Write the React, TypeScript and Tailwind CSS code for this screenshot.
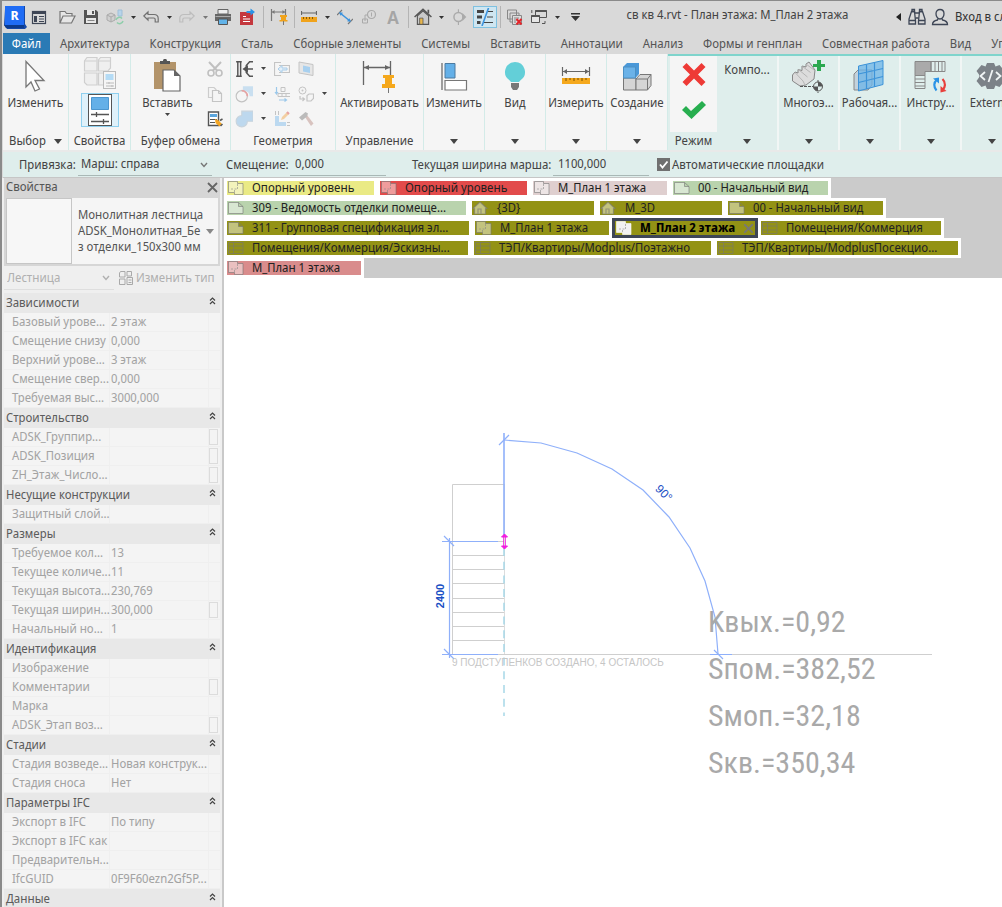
import type { ReactNode } from 'react'
import clsx from 'clsx'

const RIBBON_TABS = [
  'Архитектура',
  'Конструкция',
  'Сталь',
  'Сборные элементы',
  'Системы',
  'Вставить',
  'Аннотации',
  'Анализ',
  'Формы и генплан',
  'Совместная работа',
  'Вид',
  'Управление',
]

type ViewIcon = 'plan' | 'sheet' | 'house' | 'table'

interface ViewTab {
  title: string
  icon: ViewIcon
  color: string
  width: string
  active?: boolean
}

const VIEW_TABS: ViewTab[][] = [
  [
    { title: 'Опорный уровень', icon: 'plan', color: 'bg-[#eaea85]', width: 'w-[153px]' },
    { title: 'Опорный уровень', icon: 'plan', color: 'bg-[#e24b4b]', width: 'w-[153px]' },
    { title: 'М_План 1 этажа', icon: 'plan', color: 'bg-[#dfcfcf]', width: 'w-[140px]' },
    { title: '00 - Начальный вид', icon: 'sheet', color: 'bg-[#b9d3ad]', width: 'w-[161px]' },
  ],
  [
    { title: '309 - Ведомость отделки помеще...', icon: 'sheet', color: 'bg-[#b9d3ad]', width: 'w-[245px]' },
    { title: '{3D}', icon: 'house', color: 'bg-[#939215]', width: 'w-[128px]' },
    { title: 'М_3D', icon: 'house', color: 'bg-[#939215]', width: 'w-[128px]' },
    { title: '00 - Начальный вид', icon: 'sheet', color: 'bg-[#939215]', width: 'w-[161px]' },
  ],
  [
    { title: '311 - Групповая спецификация эл...', icon: 'sheet', color: 'bg-[#939215]', width: 'w-[248px]' },
    { title: 'М_План 1 этажа', icon: 'plan', color: 'bg-[#939215]', width: 'w-[140px]' },
    { title: 'М_План 2 этажа', icon: 'plan', color: 'bg-[#939215]', width: 'w-[146px]', active: true },
    { title: 'Помещения/Коммерция', icon: 'table', color: 'bg-[#939215]', width: 'w-[186px]' },
  ],
  [
    { title: 'Помещения/Коммерция/Эскизны...', icon: 'table', color: 'bg-[#939215]', width: 'w-[247px]' },
    { title: 'ТЭП/Квартиры/Modplus/Поэтажно', icon: 'table', color: 'bg-[#939215]', width: 'w-[243px]' },
    { title: 'ТЭП/Квартиры/ModplusПосекцио...', icon: 'table', color: 'bg-[#939215]', width: 'w-[247px]' },
  ],
  [{ title: 'М_План 1 этажа', icon: 'plan', color: 'bg-[#d98c8c]', width: 'w-[140px]' }],
]

interface Param {
  name: string
  value?: string
  button?: boolean
}

const PROPERTY_GROUPS: { title: string; params: Param[] }[] = [
  {
    title: 'Зависимости',
    params: [
      { name: 'Базовый урове...', value: '2 этаж' },
      { name: 'Смещение снизу', value: '0,000' },
      { name: 'Верхний урове...', value: '3 этаж' },
      { name: 'Смещение свер...', value: '0,000' },
      { name: 'Требуемая выс...', value: '3000,000' },
    ],
  },
  {
    title: 'Строительство',
    params: [
      { name: 'ADSK_Группир...', button: true },
      { name: 'ADSK_Позиция', button: true },
      { name: 'ZH_Этаж_Число...', button: true },
    ],
  },
  { title: 'Несущие конструкции', params: [{ name: 'Защитный слой...' }] },
  {
    title: 'Размеры',
    params: [
      { name: 'Требуемое кол...', value: '13' },
      { name: 'Текущее количе...', value: '11' },
      { name: 'Текущая высота...', value: '230,769' },
      { name: 'Текущая ширин...', value: '300,000', button: true },
      { name: 'Начальный но...', value: '1' },
    ],
  },
  {
    title: 'Идентификация',
    params: [
      { name: 'Изображение' },
      { name: 'Комментарии', button: true },
      { name: 'Марка' },
      { name: 'ADSK_Этап воз...', button: true },
    ],
  },
  {
    title: 'Стадии',
    params: [
      { name: 'Стадия возведе...', value: 'Новая конструк...' },
      { name: 'Стадия сноса', value: 'Нет' },
    ],
  },
  {
    title: 'Параметры IFC',
    params: [
      { name: 'Экспорт в IFC', value: 'По типу' },
      { name: 'Экспорт в IFC как' },
      { name: 'Предварительн...' },
      { name: 'IfcGUID', value: '0F9F60ezn2Gf5P...' },
    ],
  },
  { title: 'Данные', params: [] },
]

function Caret({ className = 'text-[#444]' }: { className?: string }) {
  return (
    <svg width="8" height="5" viewBox="0 0 8 5" className={clsx('shrink-0', className)}>
      <path d="M0 0h8L4 5z" fill="currentColor" />
    </svg>
  )
}

function SmallCaret({ className = 'text-[#444]' }: { className?: string }) {
  return (
    <svg width="5" height="3" viewBox="0 0 5 3" className={clsx('shrink-0', className)}>
      <path d="M0 0h5L2.5 3z" fill="currentColor" />
    </svg>
  )
}

function Chevron({ className }: { className?: string }) {
  return (
    <svg width="8" height="6" viewBox="0 0 8 6" className={className} fill="none" stroke="currentColor" strokeWidth="1.4">
      <path d="M1 1l3 3.5L7 1" />
    </svg>
  )
}

function Icon({ size = 18, box = size, children }: { size?: number; box?: number; children: ReactNode }) {
  return (
    <svg width={size} height={size} viewBox={`0 0 ${box} ${box}`} className="shrink-0" fill="none">
      {children}
    </svg>
  )
}

/* Quick access toolbar */

function ToolButton({ label, active, children }: { label: string; active?: boolean; children: ReactNode }) {
  return (
    <button
      type="button"
      aria-label={label}
      className={clsx(
        'flex h-[22px] w-6 shrink-0 items-center justify-center',
        active && 'border border-[#7fc1e0] bg-[#cfe6f1]',
      )}
    >
      {children}
    </button>
  )
}

function ToolCaret({ muted }: { muted?: boolean }) {
  return (
    <button type="button" aria-label="Ещё" className="flex h-[22px] w-3 shrink-0 items-center justify-center">
      <SmallCaret className={muted ? 'text-[#777]' : 'text-[#333]'} />
    </button>
  )
}

function ToolDivider({ wide }: { wide?: boolean }) {
  return (
    <span className={clsx('flex h-[22px] shrink-0 justify-center', wide ? 'w-2' : 'w-1.5')}>
      <span className="w-px bg-[#b4b4b4]" />
    </span>
  )
}

function QuickAccess() {
  return (
    <div className="flex h-8 items-center overflow-hidden">
      <button type="button" aria-label="Revit" className="flex w-6 shrink-0 justify-center">
        <svg width="24" height="24" viewBox="0 0 24 24">
          <path d="M2 4L4 1h18v18l2 3-2 2H4l-3-4z" fill="#1448a8" />
          <rect x="2" y="1" width="19" height="19" fill="#1f6cf5" />
          <path d="M1 20h20v3H3z" fill="#0c3a8c" />
          <text x="11.5" y="15" textAnchor="middle" fontSize="13" fontWeight="700" fill="#fff">
            R
          </text>
        </svg>
      </button>
      <ToolButton label="Свойства">
        <Icon size={16}>
          <rect x="1.5" y="2.5" width="13" height="12" stroke="#3e4656" strokeWidth="1.2" />
          <path d="M1 2h14v3H1z" fill="#3e4656" />
          <path d="M3 7h3v6H3z" fill="#3e4656" />
          <path d="M8 7.5h5M8 10h5M8 12.5h5" stroke="#3e4656" />
        </Icon>
      </ToolButton>
      <span className="w-1 shrink-0" />
      <ToolButton label="Открыть">
        <Icon size={18}>
          <path d="M2 15V3.500h5l1.500 2H14V8M2 15l3-7h12l-3.500 7z" stroke="#777" strokeWidth="1.2" fill="#e6e6e6" />
        </Icon>
      </ToolButton>
      <ToolButton label="Сохранить">
        <Icon size={16}>
          <path d="M1 1h12l2 2v12H1z" fill="#555" />
          <path d="M4 1h8v5H4zM3 9h10v5H3z" fill="#e8e8e8" />
          <path d="M9 2h2v3H9z" fill="#555" />
          <path d="M4.500 11.500h7" stroke="#888" />
        </Icon>
      </ToolButton>
      <ToolButton label="Синхронизировать">
        <Icon size={18}>
          <path d="M1 7l4-2 4 2v5l-4 2-4-2z" fill="#d0d0d0" stroke="#aaa" />
          <path d="M1 7l4 2 4-2M5 9v5" stroke="#aaa" />
          <path d="M12 2h4v6h-4z" fill="#b7d4ea" stroke="#9fbfd8" />
          <path d="M10 12a3.500 3.500 0 0 1 6-1.500M17 13a3.500 3.500 0 0 1-6 1.500" stroke="#8fceab" strokeWidth="1.500" />
        </Icon>
      </ToolButton>
      <ToolCaret />
      <ToolButton label="Отменить">
        <Icon size={16}>
          <path d="M.8 7L5 3v2.500h6c3 0 4.200 1.700 4.200 4V13h-3v-2.500c0-1-.5-1.500-1.500-1.500H5v2z" stroke="#707070" strokeWidth="1.200" />
        </Icon>
      </ToolButton>
      <ToolCaret />
      <ToolButton label="Повторить">
        <Icon size={16}>
          <path d="M15.200 7L11 3v2.500H5c-3 0-4.200 1.700-4.200 4V13h3v-2.500c0-1 .5-1.500 1.500-1.500H11v2z" stroke="#bdbdbd" strokeWidth="1.200" />
        </Icon>
      </ToolButton>
      <ToolCaret muted />
      <ToolButton label="Печать">
        <Icon size={18}>
          <path d="M4 1.500h10V6H4z" fill="#eee" stroke="#666" />
          <path d="M1 6h16v7H1z" fill="#666" />
          <path d="M1.500 8.500h15" stroke="#aaa" />
          <path d="M4.500 11h9v5.500h-9z" fill="#62b3e8" stroke="#555" />
        </Icon>
      </ToolButton>
      <ToolButton label="Экспорт PDF">
        <Icon size={18}>
          <path d="M2 4h13v13H2z" fill="#c4383e" />
          <path d="M5 8.500h3M5 11h7M5 13.500h7" stroke="#fff" strokeWidth="1.200" />
          <path d="M8.500 3h4V.5L17 4l-4.500 3.500V5h-4z" fill="#2b93e6" />
        </Icon>
      </ToolButton>
      <ToolDivider wide />
      <ToolButton label="Управляющий размер">
        <Icon size={18}>
          <path d="M1.500 1v12M15.500 1v6M2 4h13" stroke="#777" strokeWidth="1.200" />
          <path d="M4.500 2v4L2 4zM12.500 2v4L15 4z" fill="#777" />
          <path d="M10 7h7v2h-1v3h1.500v1.500h-8V12H11V9h-1z" fill="#f0a31c" />
          <path d="M13.500 13v4" stroke="#777" />
        </Icon>
      </ToolButton>
      <ToolDivider />
      <ToolButton label="Измерить">
        <Icon size={16}>
          <path d="M.5 2v4M15.500 2v4M1 4h14" stroke="#666" strokeWidth="1.200" />
          <path d="M0 8h16v5H0z" fill="#f0a31c" />
          <path d="M2.500 8v2M5.500 8v2M8.500 8v2M11.500 8v2" stroke="#8a5a00" />
        </Icon>
      </ToolButton>
      <ToolCaret />
      <ToolButton label="Параллельный размер">
        <Icon size={16}>
          <path d="M3 4l10 8" stroke="#3b93de" strokeWidth="1.600" />
          <path d="M0 6l5-5M11 15l5-5" stroke="#777" strokeWidth="1.200" />
          <path d="M2 3.200l4 .6-2.500 3zM14 12.800l-4-.6 2.500-3z" fill="#3b93de" />
        </Icon>
      </ToolButton>
      <ToolButton label="Марка по категории">
        <Icon size={16}>
          <circle cx="10.500" cy="5.500" r="4" stroke="#aaa" strokeWidth="1.200" />
          <path d="M10.500 3.500v4M6.500 6H4v6M1.500 10h5v4h-5z" stroke="#aaa" />
        </Icon>
      </ToolButton>
      <ToolButton label="Текст">
        <span className="text-lg leading-5 font-semibold text-[#a5a5a5]">A</span>
      </ToolButton>
      <ToolDivider />
      <ToolButton label="3D вид">
        <Icon size={18} box={16}>
          <path d="M3 7v7.500h10V7L8 2.500z" fill="#c9c9c9" stroke="#555" />
          <path d="M.5 8L8 1.200 15.500 8" stroke="#555" strokeWidth="1.300" />
          <path d="M5 9h3v5.500H5z" fill="#e8b64c" stroke="#555" strokeWidth=".7" />
          <path d="M12 1.500h1.500V5L12 4z" fill="#555" />
        </Icon>
      </ToolButton>
      <ToolCaret />
      <ToolButton label="Разрез">
        <Icon size={18} box={16}>
          <circle cx="7.500" cy="8" r="4" stroke="#aaa" strokeWidth="1.300" />
          <path d="M7.500 1v3M7.500 12v3" stroke="#aaa" />
          <path d="M11 4.500L14.500 8 11 11.500z" fill="#aaa" />
        </Icon>
      </ToolButton>
      <span className="w-0.5 shrink-0" />
      <ToolButton label="Тонкие линии" active>
        <Icon size={18}>
          <path d="M1 3.500h7M1 9h5" stroke="#444" strokeWidth="3" />
          <path d="M1 14.500h3.500" stroke="#444" strokeWidth="3" />
          <path d="M12 3.500h5M11 9h6M8 14.500h9" stroke="#444" strokeWidth="1.200" />
          <path d="M12.500 0L6 18" stroke="#3b93de" strokeWidth="1.600" />
        </Icon>
      </ToolButton>
      <ToolDivider />
      <ToolButton label="Закрыть неактивные">
        <Icon size={16}>
          <path d="M.5 1h9v9h-9zM3 4h9v9H3z" stroke="#888" />
          <path d="M5.500 6.500h9v9h-9z" stroke="#888" fill="#ddd" />
          <path d="M7 9h5M7 11h3M7 13h2" stroke="#888" />
          <path d="M9.500 10l5 5.500M14.500 10l-5 5.500" stroke="#e3262b" strokeWidth="2" />
        </Icon>
      </ToolButton>
      <ToolButton label="Переключить окна">
        <Icon size={16}>
          <path d="M4.500 6.500v-5h11v7H9" stroke="#555" />
          <path d="M4.500 2h11" stroke="#555" strokeWidth="2" />
          <path d="M.5 6.500h8v7h-8z" stroke="#555" fill="#e6e6e6" />
          <path d="M.5 7h8" stroke="#555" strokeWidth="2" />
          <path d="M.8 1v3M14 12v2.500h-3" stroke="#555" />
        </Icon>
      </ToolButton>
      <ToolCaret />
      <ToolButton label="Настройка панели">
        <svg width="9" height="8" viewBox="0 0 9 8">
          <path d="M0 0h9v1.500H0zM0 3h9L4.500 8z" fill="#333" />
        </svg>
      </ToolButton>
      <h1 className="min-w-0 flex-1 truncate pr-2 pb-1 text-center text-[#444]">
        св кв 4.rvt - План этажа: М_План 2 этажа
      </h1>
      <div className="flex w-[106px] shrink-0 items-center overflow-hidden">
        <svg width="5" height="8" viewBox="0 0 5 8" className="shrink-0">
          <path d="M5 0v8L0 4z" fill="#222" />
        </svg>
        <button type="button" aria-label="Поиск" className="ml-1 flex w-6 shrink-0 justify-center">
          <Icon size={18}>
            <path d="M3.500 3.500h3l1 9.500v3H1v-5zM14.500 3.500h-3l-1 9.500v3H17v-5z" stroke="#3e4656" strokeWidth="1.300" />
            <path d="M4 1.500h2.500v2H4zM11.500 1.500H14v2h-2.500zM7 5h4M7.500 10h3M1 12.500h6.500M10.500 12.500H17" stroke="#3e4656" strokeWidth="1.300" />
          </Icon>
        </button>
        <button type="button" className="flex shrink-0 items-center gap-1.5 pl-0.5 text-[#333]">
          <Icon size={18}>
            <path d="M9 1.500c2.500 0 4 1.800 4 4.200C13 8.500 11.200 11 9 11S5 8.500 5 5.700C5 3.300 6.500 1.500 9 1.500z" stroke="#3e4656" strokeWidth="1.300" />
            <path d="M7 10.500L6.500 12C4 12.500 1.500 13.500 1.500 16.500h15c0-3-2.500-4-5-4.500L11 10.500" stroke="#3e4656" strokeWidth="1.300" />
          </Icon>
          <span className="whitespace-nowrap">Вход в службы</span>
        </button>
      </div>
    </div>
  )
}

/* Ribbon */

function Panel({
  title,
  width,
  context,
  children,
}: {
  title?: ReactNode
  width: string
  context?: boolean
  children?: ReactNode
}) {
  return (
    <section
      className={clsx(
        'flex shrink-0 flex-col',
        width,
        context ? 'border-r-2 border-[#f1f6f5] bg-[#dfeeec]' : 'border-r border-[#d3ebe8] bg-[#f5f5f5] pt-0.5',
      )}
    >
      <div className="flex flex-1 justify-center">{children}</div>
      <div className="flex h-[18px] items-center justify-center gap-2 whitespace-nowrap">{title ?? <Caret />}</div>
    </section>
  )
}

function BigButton({ label, caret, children }: { label: string; caret?: boolean; children: ReactNode }) {
  return (
    <button type="button" className="flex flex-col items-center self-start whitespace-nowrap">
      <span className="flex h-[39px] items-center">{children}</span>
      <span className="leading-4">{label}</span>
      {caret && <SmallCaret className="mt-0.5 text-[#444]" />}
    </button>
  )
}

function SmallButton({ label, caret, children }: { label: string; caret?: boolean; children: ReactNode }) {
  return (
    <button type="button" aria-label={label} className="flex h-[25px] items-center gap-2">
      {children}
      {caret && <SmallCaret />}
    </button>
  )
}

function GeometryTools() {
  return (
    <div className="flex gap-2 self-start pr-1">
      <div className="flex flex-col">
        <SmallButton label="Вырез" caret>
          <Icon size={18} box={16}>
            <path d="M1 1.500h5M1 14.500h5M2.500 2v12M5 2v12" stroke="#555" strokeWidth="1.300" />
            <path d="M16 1.500h-3l-3 3.500v6l3 3.500h3M8 8h8" stroke="#555" strokeWidth="1.300" />
            <path d="M11 5.500L7.500 8 11 10.500z" fill="#555" stroke="#555" />
          </Icon>
        </SmallButton>
        <SmallButton label="Вырезание" caret>
          <Icon size={18} box={16}>
            <path d="M7 1h9v9h-3c0-4-3-5-6-5z" fill="#c9dff0" />
            <circle cx="6" cy="10" r="5" stroke="#c2c2c2" />
            <path d="M6 5a5 5 0 0 1 5 5" stroke="#e7a3a3" strokeWidth="1.500" />
          </Icon>
        </SmallButton>
        <SmallButton label="Соединить" caret>
          <Icon size={18} box={16}>
            <path d="M6 1h10v9h-5a5 5 0 1 1-5-5z" fill="#bdd8ee" stroke="#c8d4dd" />
          </Icon>
        </SmallButton>
      </div>
      <div className="flex flex-col">
        <SmallButton label="Сопряжение">
          <Icon size={16}>
            <path d="M7 1.500H.5v13H7M5 4.500h10.500v7H5" stroke="#c4c4c4" strokeWidth="1.200" />
            <path d="M4 8l4-3.500V7h5v2H8v2.500z" stroke="#a9cdea" fill="#e4f0f9" />
          </Icon>
        </SmallButton>
        <SmallButton label="Балки">
          <Icon size={16}>
            <path d="M2.500 1v7M1 6l1.500 2L4 6M5 14h7M10.500 12.500l2 1.500-2 1.500" stroke="#9cc8ea" strokeWidth="1.200" />
            <path d="M7 1.500h4v4H7zM4 10.500h12M4 7.500h12M4 7.500v3M8 7.500v3M12 7.500v3" stroke="#c4c4c4" />
          </Icon>
        </SmallButton>
        <SmallButton label="Стены">
          <Icon size={16}>
            <path d="M1 5h4v6h7v4H1z" fill="#bcd9f0" />
            <path d="M1.500 0v4M4.500 0v4M13 11.500h3M13 14.500h3" stroke="#c4c4c4" />
            <path d="M7 9l1-3 5-5 2 2-5 5z" fill="#f3cfa2" />
            <path d="M13 1l2 2" stroke="#e7a3a3" strokeWidth="2" />
          </Icon>
        </SmallButton>
      </div>
      <div className="flex flex-col">
        <SmallButton label="Разделить грань">
          <Icon size={16}>
            <path d="M1 1l14 2.500v11L1 12z" stroke="#c4c4c4" fill="#e6e6e6" />
            <path d="M5 4.500l7 1.500v6L5 10.500z" fill="#a8d0ef" />
          </Icon>
        </SmallButton>
        <SmallButton label="Снос" caret>
          <Icon size={16}>
            <circle cx="4.500" cy="4.500" r="3.500" stroke="#c4c4c4" />
            <circle cx="4.500" cy="4.500" r="1" fill="#c4c4c4" />
            <path d="M2 10v3h4M4.500 11.500l2 1.500-2 2M9 14V9.500L11 8h4.500v4.500L13 15H9z" stroke="#c4c4c4" strokeWidth="1.200" />
          </Icon>
        </SmallButton>
        <SmallButton label="Демонтаж">
          <Icon size={16}>
            <path d="M7 6l2-2 6.500 8.500-2.500 2.500z" fill="#d8c3bf" />
            <path d="M1 6.500L7.500 1l2.500 1.500-1 3L4 9.500z" fill="#bbb" />
          </Icon>
        </SmallButton>
      </div>
    </div>
  )
}

function Ribbon() {
  return (
    <div className="flex h-24 overflow-hidden text-[#444]">
      <Panel
        width="w-[66px]"
        title={
          <>
            Выбор <Caret />
          </>
        }
      >
        <BigButton label="Изменить">
          <Icon size={34}>
            <path d="M8 2.500l18 19h-9l4.500 8.500-4.500 2-4-9-5 5z" stroke="#777" strokeWidth="1.300" fill="#fff" />
          </Icon>
        </BigButton>
      </Panel>
      <Panel width="w-[62px]" title="Свойства">
        <div className="flex flex-col items-center gap-[3px]">
          <button type="button" aria-label="Типоразмер">
            <Icon size={34}>
              <g stroke="#cfcfcf" strokeWidth="1.200" fill="#efefef">
                <path d="M1.500 15V5l2.500-3.500h10V15zM15.500 15V4l2-2.500h10V12l-2.500 3zM1.500 17H14v12H4l-2.500-2.500zM15.500 17h10v12h-10z" />
                <path d="M1.500 5h12M15.500 5h12" />
              </g>
              <rect x="20.500" y="15.500" width="12" height="17" fill="#f5f5f5" stroke="#bbb" />
              <path d="M22.500 18h8v6h-8z" fill="#b4dbf5" />
              <path d="M23 27h8M23 30h8M26 26v2M29 29v2" stroke="#bbb" />
            </Icon>
          </button>
          <button type="button" aria-label="Свойства" className="flex h-[34px] w-[38px] items-center justify-center border border-[#8fd0ef] bg-[#dff1fa]">
            <Icon size={32}>
              <rect x="4.500" y=".5" width="23" height="31" fill="#fff" stroke="#555" />
              <path d="M7.500 3.500h17v12h-17z" fill="#64b0e8" stroke="#4c96cf" />
              <path d="M7 20.500h18M7 27.500h18M12.500 18v5M19.500 25v5" stroke="#555" strokeWidth="1.300" />
            </Icon>
          </button>
        </div>
      </Panel>
      <Panel width="w-[100px]" title="Буфер обмена">
        <div className="flex gap-3.5 pl-1">
          <BigButton label="Вставить" caret>
            <Icon size={34}>
              <path d="M3 3h22v27H3z" fill="#b3946a" />
              <path d="M9 5V2h3c0-3 4-3 4 0h3v3z" fill="#555" />
              <path d="M12 11h11l6 6v15H12z" fill="#fff" stroke="#666" strokeWidth="1.200" />
              <path d="M23 11v6h6z" fill="#666" />
            </Icon>
          </BigButton>
          <div className="flex flex-col">
            <SmallButton label="Вырезать">
              <Icon size={16}>
                <circle cx="4" cy="12" r="3" stroke="#c0c0c0" strokeWidth="1.600" />
                <circle cx="12" cy="12" r="3" stroke="#c0c0c0" strokeWidth="1.600" />
                <path d="M2 1l8.500 9M14 1L5.500 10" stroke="#c0c0c0" strokeWidth="2" />
              </Icon>
            </SmallButton>
            <SmallButton label="Копировать">
              <Icon size={16}>
                <path d="M1.500 1.500H7l2 2v8H1.500z" stroke="#ccc" strokeWidth="1.200" />
                <path d="M5.500 4.500h6l3 3v8h-9z" stroke="#c4c4c4" strokeWidth="1.200" fill="#f5f5f5" />
                <path d="M11.500 4.500v3h3" stroke="#c4c4c4" />
              </Icon>
            </SmallButton>
            <SmallButton label="Копировать свойства">
              <Icon size={16}>
                <path d="M1.500 1h10v13.500h-10z" stroke="#555" strokeWidth="1.400" fill="#fff" />
                <path d="M3 3h7v3H3z" fill="#5ca6dd" />
                <path d="M3 8.500h7M3 11.500h5" stroke="#555" />
                <path d="M8 8l3 1 4 4-2.500 2.500L8.500 12z" fill="#f5a623" />
                <path d="M13 9.500l2.500-1.500M13.500 15l2-2" stroke="#555" strokeWidth="1.500" />
              </Icon>
            </SmallButton>
          </div>
        </div>
      </Panel>
      <Panel width="w-[105px]" title="Геометрия">
        <GeometryTools />
      </Panel>
      <Panel width="w-[88px]" title="Управление">
        <BigButton label="Активировать">
          <Icon size={34}>
            <path d="M1.500 2v24M28.500 2v15M2 8.500h26" stroke="#666" strokeWidth="1.300" />
            <path d="M7 6v5L2 8.500zM23 6v5l5-2.500z" fill="#666" />
            <path d="M21 16h11v3h-2v6h3v4H20v-4h3v-6h-2z" fill="#f5a81c" />
            <path d="M26.500 29v5" stroke="#777" />
          </Icon>
        </BigButton>
      </Panel>
      <Panel width="w-[61px]">
        <BigButton label="Изменить">
          <Icon size={34}>
            <path d="M5 4v27" stroke="#777" strokeWidth="1.400" />
            <path d="M8 4.500h10V19H8z" fill="#64b0e8" stroke="#4c7ba0" />
            <path d="M8 21.500h21.500V31H8z" fill="#fff" stroke="#777" strokeWidth="1.200" />
          </Icon>
        </BigButton>
      </Panel>
      <Panel width="w-[61px]">
        <BigButton label="Вид">
          <Icon size={34}>
            <path d="M17 3a10 10 0 0 1 5.500 18.300l-1.500 1.700h-8l-1.500-1.700A10 10 0 0 1 17 3z" fill="#63cfd8" />
            <path d="M13 24h8v4l-2 3h-4l-2-3z" fill="#777" />
          </Icon>
        </BigButton>
      </Panel>
      <Panel width="w-[61px]">
        <BigButton label="Измерить">
          <Icon size={34}>
            <path d="M3.500 8v9M30.500 8v9M4 12.500h26" stroke="#666" strokeWidth="1.200" />
            <path d="M8 10v5l-4-2.500zM26 10v5l4-2.500z" fill="#666" />
            <path d="M3 19h28v6H3z" fill="#f5a81c" />
            <path d="M7 19v3M11 19v2M15 19v3M19 19v2M23 19v3M27 19v2" stroke="#7a5200" />
          </Icon>
        </BigButton>
      </Panel>
      <Panel width="w-[61px]">
        <BigButton label="Создание">
          <Icon size={34}>
            <path d="M3.500 19h12.500v12H3.500z" fill="#d5d5d5" stroke="#777" />
            <path d="M16 20l4-4.500h11v11L27.500 31H16z" fill="#d5d5d5" stroke="#777" />
            <path d="M16 20h11.500v11M27.500 20l3.500-4.500" stroke="#777" />
            <path d="M3 8l4-4h12v11l-3.500 4H3z" fill="#4a98d8" />
            <path d="M3.500 8h12v11h-12z" fill="#6bb2e8" stroke="#4c90c4" />
          </Icon>
        </BigButton>
      </Panel>
      <div className="flex min-w-0 flex-1 overflow-hidden border-t-2 border-[#7fd4cc] bg-[#dfeeec] pl-0.5">
        <section className="flex w-[47px] shrink-0 flex-col">
          <div className="flex flex-1 flex-col items-center gap-1 bg-[#f5f5f5] pt-0.5">
            <button type="button" aria-label="Отмена">
              <Icon size={32}>
                <path d="M8.500 5l7.500 7.500L23.500 5l4 4-7.500 7.500 7.500 7.500-4 4-7.500-7.500L8.500 28l-4-4 7.500-7.500L4.500 9z" fill="#ee3a36" />
              </Icon>
            </button>
            <button type="button" aria-label="Готово">
              <Icon size={32}>
                <path d="M4 16l4-4 5 5L24 7l4 4-14.500 14z" fill="#27ae4f" />
              </Icon>
            </button>
          </div>
          <div className="flex h-[18px] items-center justify-center">Режим</div>
        </section>
        <Panel width="w-[62px]" context>
          <button type="button" className="mt-1.5 self-start leading-4">
            Компо...
          </button>
        </Panel>
        <Panel width="w-[61px]" context>
          <BigButton label="Многоэ...">
            <Icon size={34}>
              <path d="M1.500 16l2.500-3 3 1v-3.500l4 1V7l4 1V5l3-2 6 8-1 9-8 6-6 1-7.500-5z" fill="#dcdcdc" stroke="#888" />
              <path d="M4 13.500l8 8.500 2 4M7.500 10.500l9 7.500M11.500 7.500l8 6M15 5l8 6" stroke="#b5b5b5" />
              <path d="M26 1h4v4h4v3h-4v4h-4V8h-4V5h4z" fill="#2aa84f" />
              <path d="M9 27.500h24M27 21v13" stroke="#555" strokeDasharray="3 1" />
              <circle cx="27" cy="27.500" r="4.500" fill="#dfeeec" stroke="#555" />
              <path d="M27 23a4.500 4.500 0 0 1 4.500 4.500H27zM27 32a4.500 4.500 0 0 1-4.500-4.500H27z" fill="#555" />
            </Icon>
          </BigButton>
        </Panel>
        <Panel width="w-[61px]" context>
          <BigButton label="Рабочая...">
            <Icon size={34}>
              <path d="M2 15l4-4h14v15l-4 5H2z" fill="#c3d2dc" stroke="#888" />
              <path d="M6.500 7L31 1.500v24L6.500 32z" fill="#6cb4e8" fillOpacity=".75" stroke="#3d93d8" />
              <path d="M6.500 15L31 9.500M6.500 23.500L31 17.500M14.500 5.500V30M22.500 3.500V28" stroke="#3d93d8" strokeWidth="1.200" />
            </Icon>
          </BigButton>
        </Panel>
        <Panel width="w-[61px]" context>
          <BigButton label="Инстру...">
            <Icon size={34}>
              <path d="M2 2.500h16v10h-6v4H2z" fill="#aaa" stroke="#888" />
              <path d="M18 2.500h14v10H18zM22 2.500v10M25.500 2.500v10M29 2.500v10" stroke="#888" />
              <path d="M2 16.500h10v13H2zM2 20h10M2 23.500h10M2 27h10" stroke="#888" />
              <path d="M24 20.500c-3.500 3-3.500 7.500-.5 11" stroke="#2b93e6" strokeWidth="2.200" />
              <path d="M20 19.500l6-1v6z" fill="#2b93e6" />
              <path d="M29.500 20c3.500 3.500 3 8.500 0 11" stroke="#e8403c" strokeWidth="2.200" />
              <path d="M33.500 32l-6 1.500V27z" fill="#e8403c" />
            </Icon>
          </BigButton>
        </Panel>
        <Panel width="w-[61px]" context>
          <BigButton label="Extern...">
            <Icon size={34}>
              <path
                d="M13 4h7l1.500 3.500 4-1.500 5 6-2.500 3.500v3L30.500 22l-5 6-4-1.500L20 30h-7l-1.500-3.500-4 1.500-5-6L5 18.500v-3L2.500 12l5-6 4 1.500z"
                fill="#7c8288"
              />
              <path d="M11 13l-4.500 4 4.500 4M22 13l4.500 4-4.500 4M18.500 11l-4 12" stroke="#f0f4f5" strokeWidth="1.800" />
            </Icon>
          </BigButton>
        </Panel>
      </div>
    </div>
  )
}

function OptionsBar() {
  return (
    <div className="flex h-7 items-center overflow-hidden border-t-2 border-b border-t-[#e9e9e9] border-b-[#c6c6c6] bg-[#dfeeec] pl-4 whitespace-nowrap text-[#444]">
      <label htmlFor="binding" className="w-[57px] shrink-0">
        Привязка:
      </label>
      <div className="relative ml-0.5 flex w-[134px] shrink-0 items-center">
        <select id="binding" className="h-[22px] w-full appearance-none border-b border-[#a9b8b6] bg-transparent pl-[3px]">
          <option>Марш: справа</option>
        </select>
        <Chevron className="pointer-events-none absolute right-1 text-[#777]" />
      </div>
      <label htmlFor="offset" className="ml-3.5 w-[62px] shrink-0">
        Смещение:
      </label>
      <input
        id="offset"
        defaultValue="0,000"
        className="ml-0.5 h-[22px] w-24 shrink-0 border-b border-[#a9b8b6] bg-transparent pb-0.5 pl-[5px]"
      />
      <label htmlFor="run-width" className="ml-[26px] w-[139px] shrink-0">
        Текущая ширина марша:
      </label>
      <input
        id="run-width"
        defaultValue="1100,000"
        className="ml-0.5 h-[22px] w-24 shrink-0 border-b border-[#a9b8b6] bg-transparent pb-0.5 pl-[5px]"
      />
      <label className="ml-2 flex shrink-0 items-center gap-0.5">
        <span className="relative flex">
          <input type="checkbox" defaultChecked className="peer size-[13px] appearance-none bg-white checked:bg-[#707070]" />
          <svg viewBox="0 0 13 13" className="pointer-events-none absolute inset-0 hidden peer-checked:block" fill="none">
            <path d="M3 6.500L5.500 9.500 10.500 3.500" stroke="#fff" strokeWidth="1.800" />
          </svg>
        </span>
        Автоматические площадки
      </label>
    </div>
  )
}

/* Properties palette */

function PropertiesPalette() {
  return (
    <aside className="flex w-[222px] shrink-0 flex-col border-r-2 border-[#c9c9c9] bg-[#efefef] px-0.5">
      <div className="flex h-[18px] items-center justify-between bg-[#d6d6d6] px-0.5 text-[#555]">
        <h2>Свойства</h2>
        <button type="button" aria-label="Закрыть" className="text-[#666]">
          <svg width="11" height="11" viewBox="0 0 11 11" fill="none" stroke="currentColor" strokeWidth="1.800">
            <path d="M1 1l9 9M10 1l-9 9" />
          </svg>
        </button>
      </div>
      <button type="button" className="flex h-[70px] items-center border-2 border-[#d6d6d6] bg-[#f5f5f5] text-left">
        <span className="h-[66px] w-[66px] shrink-0 border border-[#c6c6c6] bg-[#f7f7f7]" />
        <span className="min-w-0 flex-1 pl-1.5 leading-4 whitespace-nowrap text-[#555]">
          Монолитная лестница
          <br />
          ADSK_Монолитная_Бе
          <br />з отделки_150х300 мм
        </span>
        <Caret className="mr-1 text-[#888]" />
      </button>
      <div className="flex h-[27px] items-start text-[#b0b0b0]">
        <div className="relative flex w-[110px] items-center">
          <select aria-label="Категория" disabled className="h-6 w-full appearance-none border-b border-[#dedede] bg-transparent pl-[3px]">
            <option>Лестница</option>
          </select>
          <Chevron className="pointer-events-none absolute right-1" />
        </div>
        <button type="button" disabled className="ml-[5px] flex h-6 items-center gap-[3px] whitespace-nowrap">
          <Icon size={14}>
            <path d="M.5 2l1-1.500H6V6H.5zM.5 8H6v5.500H.5zM8 .5h4.500V5H8zM8 6.500h5.500v7H8zM9.500 9h3M9.500 11.500h3" stroke="#a9a9a9" />
          </Icon>
          Изменить тип
        </button>
      </div>
      <table className="w-full table-fixed border-separate border-spacing-0 bg-[#f4f4f4] text-[#a3a3a3]">
        <colgroup>
          <col className="w-[105px]" />
          <col />
          <col className="w-3" />
        </colgroup>
        {PROPERTY_GROUPS.map(group => (
          <tbody key={group.title}>
            <tr className="h-5 bg-[#e8e8e8]">
              <th colSpan={2} className="p-0 pl-0.5 text-left leading-4 font-normal text-[#5c5c5c]">
                {group.title}
              </th>
              <th className="p-0 align-top">
                <button type="button" aria-label="Свернуть" className="mt-1 ml-px block text-[#444]">
                  <svg width="7" height="8" viewBox="0 0 7 8" fill="none" stroke="currentColor" strokeWidth="1.200">
                    <path d="M1 3.500l2.500-2.500L6 3.500M1 7l2.500-2.500L6 7" />
                  </svg>
                </button>
              </th>
            </tr>
            {group.params.map(param => (
              <tr key={param.name} className="h-[19px]">
                <td className="border-b border-[#efefef] p-0 pl-2 leading-4 whitespace-nowrap">{param.name}</td>
                <td className="border-b border-l border-[#efefef] p-0 pl-px leading-4 whitespace-nowrap">{param.value}</td>
                <td className="border-b border-l border-[#efefef] p-0">
                  {param.button && (
                    <button type="button" aria-label={param.name} className="block h-4 w-[9px] border border-[#dcdcdc]" />
                  )}
                </td>
              </tr>
            ))}
          </tbody>
        ))}
      </table>
    </aside>
  )
}

/* Open views */

function ViewTabIcon({ icon, active }: { icon: ViewIcon; active?: boolean }) {
  const fill = active ? '#f2f2f2' : '#ffffff'
  const fillOpacity = active ? 1 : 0.45
  return (
    <svg
      width="18"
      height="16"
      viewBox="0 0 18 16"
      className="shrink-0"
      fill="none"
      stroke={active ? '#ffffff' : '#777777'}
      strokeOpacity=".6"
    >
      {icon === 'plan' && (
        <>
          <path d="M1.500 1.500h9v2h5.500v11H7.500v-2h-6z" fill={fill} fillOpacity={fillOpacity} />
          <path d="M10.500 4v5h-3v3M4 9h3" strokeDasharray="2 1" stroke="#888" />
        </>
      )}
      {icon === 'sheet' && <path d="M1.500 2.500h10l4.500 4v7H1.500zM11.500 2.500v4H16" fill={fill} fillOpacity={fillOpacity} />}
      {icon === 'house' && (
        <path d="M1 8.500L8 2l7 6.500h-1.500V14h-11V8.500zM6 14V9h3v5" fill={fill} fillOpacity={fillOpacity} strokeWidth="1.200" />
      )}
      {icon === 'table' && <path d="M1.500 2.500H16v11H1.500zM1.500 6H16M1.500 10H16M6.500 2.500v11" />}
    </svg>
  )
}

function ViewTabs() {
  return (
    <nav className="flex flex-col bg-[#cbcbcb]">
      {VIEW_TABS.map((row, i) => (
        <div key={i} className="flex h-5 overflow-hidden">
          {row.map((tab, j) => (
            <button
              key={j}
              type="button"
              className={clsx(
                'flex shrink-0 items-center border-[3px] whitespace-nowrap',
                tab.width,
                tab.color,
                tab.active ? 'border-[#3e4656] font-bold text-black' : 'border-white text-[#222]',
              )}
            >
              <ViewTabIcon icon={tab.icon} active={tab.active} />
              <span className="ml-[7px]">{tab.title}</span>
              {tab.active && (
                <svg width="9" height="9" viewBox="0 0 9 9" className="mr-0.5 ml-auto" stroke="#777" strokeWidth="1.800">
                  <path d="M0 0l9 9M9 0L0 9" />
                </svg>
              )}
            </button>
          ))}
        </div>
      ))}
    </nav>
  )
}

const TREADS = [263, 277, 291, 305, 320, 334, 348, 362]

const NOTES = ['Kвых.=0,92', 'Sпом.=382,52', 'Sмоп.=32,18', 'Sкв.=350,34']

function Drawing() {
  return (
    <svg width="778" height="629" viewBox="0 0 778 629" className="shrink-0" fill="none">
      {/* stair run */}
      <g stroke="#cfcfcf">
        <path d="M228.500 376.500v-170h52M228 376.500h480" />
        <path d="M280.500 206v170" stroke="#dcdcdc" />
        {TREADS.map(y => (
          <path key={y} d={`M228 ${y + 0.5}h52`} />
        ))}
      </g>
      <path d="M280 270v168" stroke="#a6d8e8" strokeWidth="1.500" strokeDasharray="8 5.700" />

      {/* linear and angular dimensions */}
      <g stroke="#8fb0fa" strokeWidth="1.200">
        <path d="M280 155v103" strokeWidth="1.600" />
        <path d="M275 167l10-10" />
        <path d="M280 162l37 3 36 10 35 16 31 21 26 27 21 31 15 33 10 36 3 37" />
        <path d="M486 376.500h22M490 372l9 9" />
        <path d="M225.500 260v120M218 263.500h56M218 376.500h56M220 258l10 10M220 371l10 10" />
      </g>
      <g fontSize="11" fill="#1b50c4" textAnchor="middle" className="font-['Liberation_Sans',sans-serif]">
        <text transform="translate(220 318) rotate(-90)" fontWeight="700">
          2400
        </text>
        <text transform="translate(437 218) rotate(45)" fontSize="12">
          90°
        </text>
      </g>
      <g stroke="#f21be0" fill="#f21be0">
        <path d="M279.500 258v11M281.500 258v11" strokeWidth=".8" />
        <path d="M277.500 259l3-3 3 3zM277.500 268l3 3 3-3z" />
      </g>

      <text x="228" y="388" fontSize="10" fill="#c6c6c6" className="font-['Liberation_Sans',sans-serif]">
        9 ПОДСТУПЕНКОВ СОЗДАНО, 4 ОСТАЛОСЬ
      </text>
      <g fontSize="30" fill="#a9a9a9" className="font-['Roboto_Condensed',Roboto,sans-serif]">
        {NOTES.map((note, i) => (
          <text key={note} x="484" y={354 + i * 47}>
            {note}
          </text>
        ))}
      </g>
    </svg>
  )
}

export default function App() {
  return (
    <div className="flex min-h-screen flex-col overflow-hidden border-t border-l-2 border-[#8a8a8a] bg-[#d9d9d9] font-['Noto_Sans_Display','Noto_Sans',sans-serif] text-xs leading-4">
      <header className="flex flex-col pl-px">
        <QuickAccess />
        <div className="flex h-[21px] items-center overflow-hidden whitespace-nowrap text-[#555]">
          <button type="button" className="h-full w-[47px] shrink-0 bg-[#2a7ab5] text-white">
            Файл
          </button>
          {RIBBON_TABS.map(tab => (
            <button key={tab} type="button" className="shrink-0 px-2.5">
              {tab}
            </button>
          ))}
        </div>
        <Ribbon />
        <OptionsBar />
      </header>
      <div className="flex flex-1">
        <PropertiesPalette />
        <main className="flex min-w-0 flex-1 flex-col bg-white">
          <ViewTabs />
          <div className="flex flex-1 overflow-hidden">
            <Drawing />
          </div>
        </main>
      </div>
    </div>
  )
}
